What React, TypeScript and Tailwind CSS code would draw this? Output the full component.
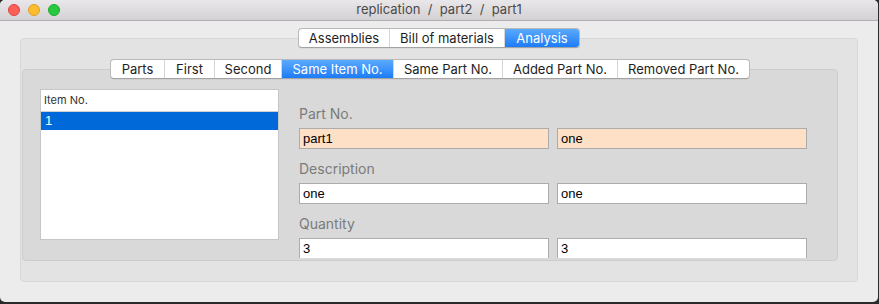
const sf = { fontFamily: 'Inter, "Liberation Sans", sans-serif' };
const helv = { fontFamily: '"Liberation Sans", Arial, sans-serif' };

type Tab = { label: string; w: string; active?: boolean };

const topTabs: Tab[] = [
  { label: 'Assemblies', w: 'w-[90px]' },
  { label: 'Bill of materials', w: 'w-[115px]' },
  { label: 'Analysis', w: 'w-[75px]', active: true },
];

const subTabs: Tab[] = [
  { label: 'Parts', w: 'w-[53px]' },
  { label: 'First', w: 'w-[50px]' },
  { label: 'Second', w: 'w-[67px]' },
  { label: 'Same Item No.', w: 'w-[112px]', active: true },
  { label: 'Same Part No.', w: 'w-[109px]' },
  { label: 'Added Part No.', w: 'w-[115px]' },
  { label: 'Removed Part No.', w: 'w-[132px]' },
];

function Segmented({ tabs }: { tabs: Tab[] }) {
  return (
    <div
      className="flex h-[20px] shrink-0 overflow-hidden rounded-[4px] border border-[#b9b9b9] border-b-[#a3a3a3] bg-white shadow-[0_0.5px_0.5px_rgba(0,0,0,0.08)]"
      style={sf}
    >
      {tabs.map((t, i) => (
        <div
          key={t.label}
          className={
            'flex h-full items-center justify-center text-[13px] leading-none ' +
            t.w +
            (i > 0 ? ' border-l border-[#d6d6d6]' : '') +
            (t.active
              ? ' bg-gradient-to-b from-[#5aa9fd] to-[#1a7cf6] border-[#3d8ff8] text-white'
              : ' text-[#1e1e1e]')
          }
        >
          {t.label}
        </div>
      ))}
    </div>
  );
}

function Field({ value, peach }: { value: string; peach?: boolean }) {
  return (
    <div
      className={
        'flex h-[21px] w-[250px] items-center border border-[#acacac] pl-[3px] text-[13px] text-black ' +
        (peach ? 'bg-[#fde0c5]' : 'bg-white')
      }
      style={helv}
    >
      {value}
    </div>
  );
}

function Row({ label, a, b, peach, first }: { label: string; a: string; b: string; peach?: boolean; first?: boolean }) {
  return (
    <div className={first ? '' : 'mt-[11px]'}>
      <div className="mb-[6px] h-[17px] text-[14px] leading-[17px] text-[#7b7b7b]" style={sf}>
        {label}
      </div>
      <div className="flex gap-[8px]">
        <Field value={a} peach={peach} />
        <Field value={b} peach={peach} />
      </div>
    </div>
  );
}

export default function App() {
  return (
    <div className="h-[304px] w-[879px] bg-[#2a2a2a]">
      <div className="flex h-[302px] w-[878px] flex-col overflow-hidden rounded-[5px] bg-[#ececec]">
        {/* title bar */}
        <div className="relative flex h-[21px] shrink-0 items-center justify-center border-b border-[#b1afb1] bg-gradient-to-b from-[#e9e7e9] to-[#d3d1d3]">
          <div className="absolute left-[8px] top-[4px] flex gap-[8px]">
            <span className="h-[12px] w-[12px] rounded-full border border-[#e0443e] bg-[#fc5f57]" />
            <span className="h-[12px] w-[12px] rounded-full border border-[#dea123] bg-[#fdbc2e]" />
            <span className="h-[12px] w-[12px] rounded-full border border-[#1aab29] bg-[#28c93f]" />
          </div>
          <span className="whitespace-pre text-[13px] text-[#4a4a4a]" style={sf}>
            replication  /  part2  /  part1
          </span>
        </div>

        <div className="pl-[20px] pt-[17px]">
          <div className="flex h-[244px] w-[838px] flex-col items-center rounded-[4px] border border-[#d7d7d7] bg-[#e3e3e3]">
            <div className="-mt-[11px]">
              <Segmented tabs={topTabs} />
            </div>

            <div className="ml-[1px] mt-[21px] flex h-[192px] w-[816px] flex-col items-center self-start rounded-[4px] border border-[#cdcdcd] bg-[#d9d9d9]">
              <div className="-mt-[11px]">
                <Segmented tabs={subTabs} />
              </div>

              <div className="mt-[10px] flex self-stretch pl-[17px]">
                {/* item list */}
                <div className="h-[151px] w-[239px] border border-[#c6c6c6] bg-white">
                  <div
                    className="flex h-[22px] items-center border-b border-[#cfcfcf] pl-[3px] text-[11px] text-[#333]"
                    style={sf}
                  >
                    Item No.
                  </div>
                  <div className="flex h-[18px] items-center bg-[#0069d9] pl-[4px] text-[13px] text-white" style={helv}>
                    1
                  </div>
                </div>

                {/* details */}
                <div className="ml-[20px] h-[169px] overflow-hidden pt-[16px]">
                  <Row label="Part No." a="part1" b="one" peach first />
                  <Row label="Description" a="one" b="one" />
                  <Row label="Quantity" a="3" b="3" />
                </div>
              </div>
            </div>
          </div>
        </div>
      </div>
    </div>
  );
}
